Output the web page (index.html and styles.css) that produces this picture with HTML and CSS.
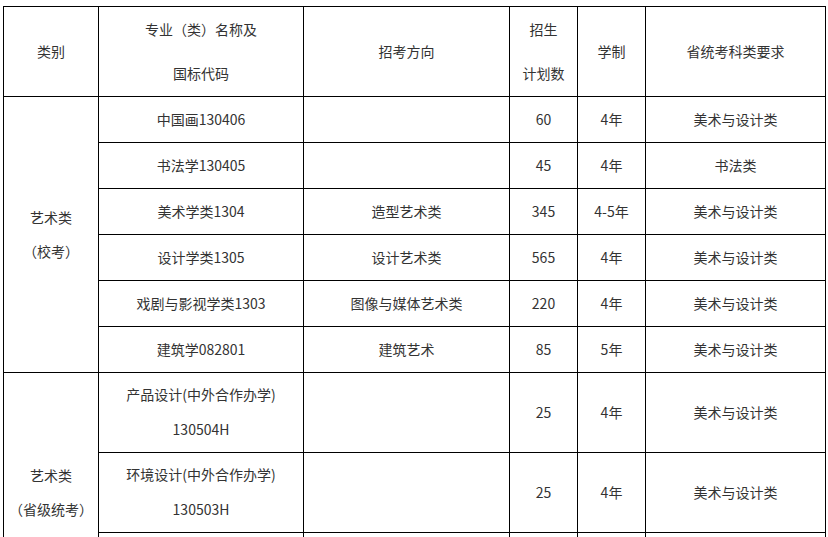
FILE: index.html
```html
<!DOCTYPE html>
<html lang="zh-CN">
<head>
<meta charset="utf-8">
<link rel="stylesheet" href="styles.css">
</head>
<body>
<table class="plan">
  <colgroup>
    <col class="c1"><col class="c2"><col class="c3"><col class="c4"><col class="c5"><col class="c6">
  </colgroup>
  <tr class="head">
    <td>类别</td>
    <td><div class="two h">专业（类）名称及<br>国标代码</div></td>
    <td>招考方向</td>
    <td><div class="two h">招生<br>计划数</div></td>
    <td>学制</td>
    <td>省统考科类要求</td>
  </tr>
  <tr class="row">
    <td rowspan="6"><div class="two g">艺术类<br>（校考）</div></td>
    <td>中国画130406</td><td></td><td>60</td><td>4年</td><td>美术与设计类</td>
  </tr>
  <tr class="row"><td>书法学130405</td><td></td><td>45</td><td>4年</td><td>书法类</td></tr>
  <tr class="row"><td>美术学类1304</td><td>造型艺术类</td><td>345</td><td>4-5年</td><td>美术与设计类</td></tr>
  <tr class="row"><td>设计学类1305</td><td>设计艺术类</td><td>565</td><td>4年</td><td>美术与设计类</td></tr>
  <tr class="row"><td>戏剧与影视学类1303</td><td>图像与媒体艺术类</td><td>220</td><td>4年</td><td>美术与设计类</td></tr>
  <tr class="row"><td>建筑学082801</td><td>建筑艺术</td><td>85</td><td>5年</td><td>美术与设计类</td></tr>
  <tr class="tall">
    <td rowspan="3"><div class="two g">艺术类<br>（省级统考）</div></td>
    <td><div class="two t">产品设计(中外合作办学)<br>130504H</div></td><td></td><td>25</td><td>4年</td><td>美术与设计类</td>
  </tr>
  <tr class="tall">
    <td><div class="two t">环境设计(中外合作办学)<br>130503H</div></td><td></td><td>25</td><td>4年</td><td>美术与设计类</td>
  </tr>
  <tr class="tall">
    <td></td><td></td><td></td><td></td><td></td>
  </tr>
</table>
</body>
</html>
```

FILE: styles.css
```css
html, body {
  margin: 0;
  background: #fff;
}
body {
  padding: 6px 0 0 3px;
  font-family: "Noto Sans CJK SC", "Noto Sans", sans-serif;
  font-size: 14px;
  color: #333;
}
.plan {
  border-collapse: collapse;
  table-layout: fixed;
  width: 822px;
}
.c1 { width: 95px; }
.c2 { width: 205px; }
.c3 { width: 206px; }
.c4 { width: 68px; }
.c5 { width: 68px; }
.c6 { width: 180px; }
.plan td {
  border: 1px solid #000;
  padding: 0 0 1px;
  text-align: center;
  vertical-align: middle;
  line-height: 20px;
}
.head td { height: 88px; }
.row td { height: 44px; }
.tall td { height: 78px; }
.two.h { line-height: 44px; }
.two.t { line-height: 35px; }
.two.g { line-height: 34px; }
```
